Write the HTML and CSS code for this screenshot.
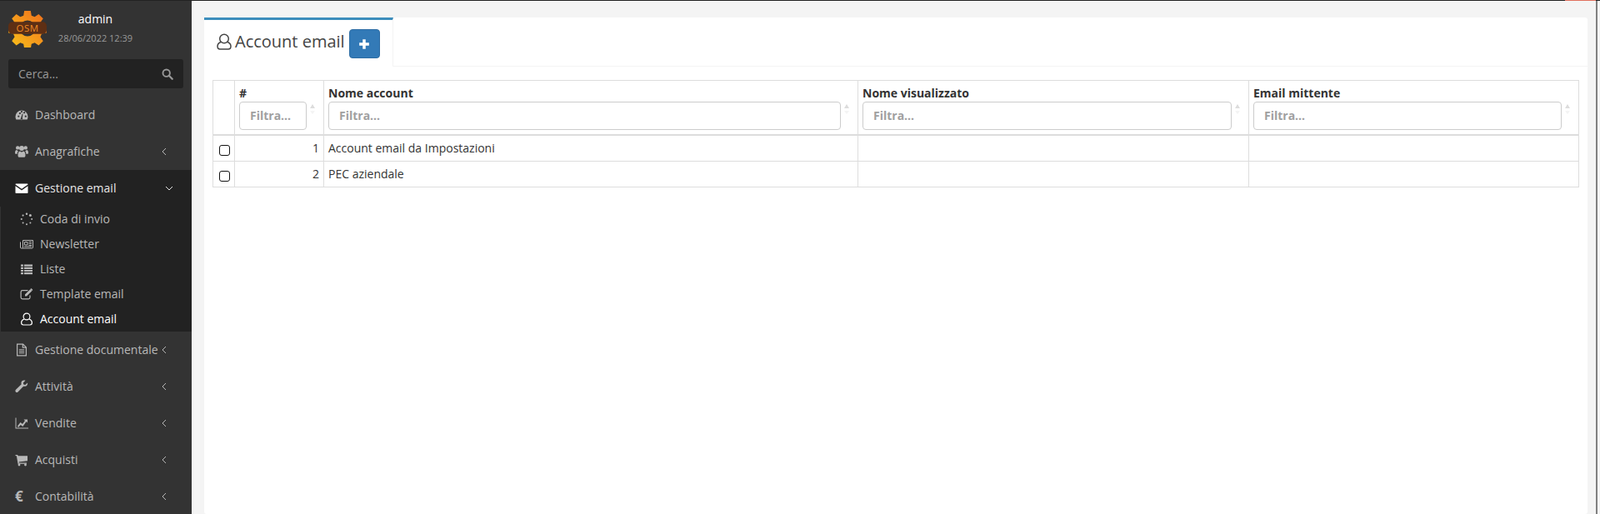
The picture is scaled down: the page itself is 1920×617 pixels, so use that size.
FILE: index.html
```html
<!DOCTYPE html>
<html lang="it">
<head>
<meta charset="utf-8">
<title>Account email</title>
<link rel="stylesheet" href="styles.css">
</head>
<body>
<div class="topline"><span class="topline-alert"></span></div>
<div class="shell">
  <aside class="sidebar">
    <div class="user-panel">
      <svg class="logo" viewBox="0 0 48 48" width="46" height="46">
        <defs><linearGradient id="g" x1="0" y1="1" x2="1" y2="0"><stop offset="0" stop-color="#f9c31b"/><stop offset="1" stop-color="#ef6c1c"/></linearGradient></defs>
        <g fill="url(#g)">
          <path d="M20 2h8l1 6 4 1.700 5-3.500 5.600 5.600-3.500 5 1.700 4 6 1v8l-6 1-1.700 4 3.500 5-5.600 5.600-5-3.500-4 1.700-1 6h-8l-1-6-4-1.700-5 3.500-5.600-5.600 3.500-5-1.700-4-6-1v-8l6-1 1.700-4-3.500-5 5.600-5.600 5 3.500 4-1.700z"/>
        </g>
        <circle cx="24" cy="24" r="10" fill="#333"/>
        <rect x="0" y="16" width="48" height="15" rx="5" fill="#5e2f14"/>
        <text class="logo-text" x="24" y="28.500" text-anchor="middle">OSM</text>
      </svg>
      <div class="user-info">
        <div class="user-name">admin</div>
        <div class="user-date">28/06/2022 12:39</div>
      </div>
    </div>
    <form class="search">
      <span class="search-text">Cerca...</span>
      <svg class="search-icon" viewBox="0 0 16 16" width="14" height="14"><circle cx="6.500" cy="6.500" r="4.800" fill="none" stroke="currentColor" stroke-width="2.200"/><path d="M10 10l4.500 4.500" stroke="currentColor" stroke-width="2.600" stroke-linecap="round"/></svg>
    </form>
    <nav>
      <ul class="menu">
        <li class="item"><a class="link">
          <svg class="ico" viewBox="0 0 16 16"><path fill-rule="evenodd" d="M8 2.500a7.500 7.500 0 0 0-7.500 7.500c0 1.300.3 2.500.9 3.500h13.200c.6-1 .9-2.200.9-3.500A7.500 7.500 0 0 0 8 2.500zM3.200 9.600a1.100 1.100 0 1 1 0 .1zM4.800 6a1.100 1.100 0 1 1 0 .1zM7 4.500a1.100 1.100 0 1 1 2 0 1.100 1.100 0 0 1-2 0zM10.300 6a1.100 1.100 0 1 1 1.500.100 1.100 1.100 0 0 1-1.500-.1zM11.700 9.700a1.100 1.100 0 1 1 2.200 0 1.100 1.100 0 0 1-2.200 0zM7 12l1.700-5.500.8.200L8.800 12A1.300 1.300 0 1 1 7 12z"/></svg>
          <span>Dashboard</span></a></li>
        <li class="item"><a class="link">
          <svg class="ico" viewBox="0 0 16 16"><circle cx="3.200" cy="3.400" r="2.200"/><circle cx="12.800" cy="3.400" r="2.200"/><circle cx="8" cy="4" r="3"/><path d="M0 9.500c0-2.200.8-3.400 2-3.400.5.700 1.100 1 1.900 1.100-.8.900-1.200 2.200-1.200 3.600H1c-.6 0-1-.5-1-1.300zM16 9.500c0-2.200-.8-3.400-2-3.400-.5.700-1.100 1-1.900 1.100.8.900 1.200 2.200 1.200 3.600H15c.6 0 1-.5 1-1.300zM3.500 12.500c0-3.300 1.100-4.900 2.600-4.900.5.600 1.200.9 1.900.9s1.400-.3 1.900-.9c1.500 0 2.600 1.600 2.600 4.900 0 1.500-.7 2.300-1.800 2.300H5.300c-1.100 0-1.800-.8-1.800-2.300z"/></svg>
          <span>Anagrafiche</span>
          <svg class="chev" viewBox="0 0 8 12"><path d="M6 2L2 6l4 4"/></svg></a></li>
        <li class="item active"><a class="link">
          <svg class="ico" viewBox="0 0 16 16"><path d="M.500 3.500A.9.900 0 0 1 1.400 2.500h13.200c.5 0 .9.400.9 1l-7.500 5.200zM.500 5.300V13c0 .6.400 1 .9 1h13.200c.5 0 .9-.4.900-1V5.300L8 10.500z"/></svg>
          <span>Gestione email</span>
          <svg class="chev" viewBox="0 0 12 8"><path d="M2 2l4 4 4-4"/></svg></a>
          <ul class="submenu">
            <li><a class="sublink">
              <svg class="ico" viewBox="0 0 16 16"><circle cx="8" cy="1.800" r="1.200"/><circle cx="12.400" cy="3.600" r="1.500"/><circle cx="14.200" cy="8" r="1"/><circle cx="12.400" cy="12.400" r="1"/><circle cx="8" cy="14.200" r="1"/><circle cx="3.600" cy="12.400" r="1"/><circle cx="1.800" cy="8" r="1.100"/><circle cx="3.600" cy="3.600" r="1.100"/></svg>
              <span>Coda di invio</span></a></li>
            <li><a class="sublink">
              <svg class="ico" viewBox="0 0 16 16"><path fill="none" stroke="currentColor" d="M.500 5.500V12c0 .6.300 1 1 1h13c.6 0 1-.4 1-1V3.500h-12V12.500"/><path fill="none" stroke="currentColor" d="M5.500 5.500h3.500v3.500H5.500z"/><path d="M10.500 5H14v1h-3.500zM10.500 7H14v1h-3.500zM10.500 9H14v1h-3.500zM5 10.500h9v1H5z"/></svg>
              <span>Newsletter</span></a></li>
            <li><a class="sublink">
              <svg class="ico" viewBox="0 0 16 16"><path d="M1 2.500h3v2.200H1zM5 2.500h10v2.200H5zM1 5.700h3v2.200H1zM5 5.700h10v2.200H5zM1 8.900h3v2.200H1zM5 8.900h10v2.200H5zM1 12.100h3v2.200H1zM5 12.100h10v2.200H5z"/></svg>
              <span>Liste</span></a></li>
            <li><a class="sublink">
              <svg class="ico" viewBox="0 0 16 16"><path fill="none" stroke="currentColor" stroke-width="1.200" d="M12 9.500V12c0 1-.7 1.800-1.800 1.800H3c-1.100 0-1.900-.8-1.900-1.800V5.500c0-1 .8-1.800 1.900-1.800h6.500"/><path d="M6 8.500L12.300 2.300l2 2L8 10.500H6zM13 1.500c.3-.3.700-.3 1 0l1 1c.3.300.3.700 0 1l-.6.600-2-2z"/></svg>
              <span>Template email</span></a></li>
            <li class="current"><a class="sublink">
              <svg class="ico" viewBox="0 0 16 16"><circle cx="8" cy="5" r="3.900" fill="none" stroke="currentColor" stroke-width="1.200"/><path fill="none" stroke="currentColor" stroke-width="1.200" d="M5 8C2.900 8.800 1.600 10.200 1.600 12.300c0 1.500.9 2.700 2.400 2.700h8c1.500 0 2.400-1.200 2.400-2.700 0-2.100-1.300-3.500-3.400-4.300"/></svg>
              <span>Account email</span></a></li>
          </ul>
        </li>
        <li class="item"><a class="link">
          <svg class="ico" viewBox="0 0 16 16"><path fill="none" stroke="currentColor" stroke-width="1.200" d="M2.600 1.100h7l3.800 3.800v10H2.600zM9.300 1.100v4h4"/><path d="M4.800 7.200h6.400v1H4.800zM4.800 9.200h6.400v1H4.800zM4.800 11.200h6.400v1H4.800z"/></svg>
          <span>Gestione documentale</span>
          <svg class="chev" viewBox="0 0 8 12"><path d="M6 2L2 6l4 4"/></svg></a></li>
        <li class="item"><a class="link">
          <svg class="ico" viewBox="0 0 16 16"><path d="M15 3.500l-2.700 2.500-2-.6-.5-2L12.500.8C10.600.2 8.800.7 8 2c-.7 1-.7 2.200-.3 3.200L1 11.800c-.8.800-.8 1.900-.1 2.600.8.800 1.900.8 2.600 0l6.600-6.700c1.700.4 3.300 0 4.300-1.300.7-.9.900-1.800.6-2.900z"/></svg>
          <span>Attività</span>
          <svg class="chev" viewBox="0 0 8 12"><path d="M6 2L2 6l4 4"/></svg></a></li>
        <li class="item"><a class="link">
          <svg class="ico" viewBox="0 0 16 16"><path d="M.500 1.500h1v12H16v1H.500z"/><path d="M3 11.500l3.500-4.500 2.500 2 3-4-1.500-1.500H15v4l-1.400-1.400L9.300 12 6.800 10l-2.800 3z"/></svg>
          <span>Vendite</span>
          <svg class="chev" viewBox="0 0 8 12"><path d="M6 2L2 6l4 4"/></svg></a></li>
        <li class="item"><a class="link">
          <svg class="ico" viewBox="0 0 16 16"><path d="M.500 2h2.700l.4 1.300H15v6L4.600 10.500l.2 1H14v1.200H3.500L1.900 3.200H.500z"/><circle cx="5" cy="14" r="1.400"/><circle cx="12.500" cy="14" r="1.400"/></svg>
          <span>Acquisti</span>
          <svg class="chev" viewBox="0 0 8 12"><path d="M6 2L2 6l4 4"/></svg></a></li>
        <li class="item"><a class="link">
          <b class="ico euro">€</b>
          <span>Contabilità</span>
          <svg class="chev" viewBox="0 0 8 12"><path d="M6 2L2 6l4 4"/></svg></a></li>
      </ul>
    </nav>
  </aside>

  <main class="content">
    <section class="panel">
      <header class="tabs">
        <div class="tab">
          <svg class="tab-icon" viewBox="0 0 18 20"><circle cx="9" cy="6.500" r="5.300" fill="none" stroke="currentColor" stroke-width="1.500"/><path fill="none" stroke="currentColor" stroke-width="1.500" d="M5 10.500C2.500 11.500 1 13.500 1 15.500c0 2 1 3.500 3 3.500h10c2 0 3-1.500 3-3.500 0-2-1.500-4-4-5"/></svg>
          <h1 class="tab-title">Account email</h1>
          <button class="add-btn" type="button"><svg viewBox="0 0 12 12" width="14" height="14"><path d="M4.500 1h3v3.500H11v3H7.500V11h-3V7.500H1v-3h3.500z" fill="#fff"/></svg></button>
        </div>
      </header>
      <div class="tab-body">
        <table class="grid">
          <colgroup>
            <col class="c-check"><col class="c-id"><col class="c-name"><col class="c-display"><col class="c-mail">
          </colgroup>
          <thead>
            <tr>
              <th></th>
              <th><div class="th-label">#</div><div class="filter"><input class="filter-input" placeholder="Filtra..."><span class="sort"></span></div></th>
              <th><div class="th-label">Nome account</div><div class="filter"><input class="filter-input" placeholder="Filtra..."><span class="sort"></span></div></th>
              <th><div class="th-label">Nome visualizzato</div><div class="filter"><input class="filter-input" placeholder="Filtra..."><span class="sort"></span></div></th>
              <th><div class="th-label">Email mittente</div><div class="filter"><input class="filter-input" placeholder="Filtra..."><span class="sort"></span></div></th>
            </tr>
          </thead>
          <tbody>
            <tr><td class="check"><span class="box"></span></td><td class="num">1</td><td>Account email da Impostazioni</td><td></td><td></td></tr>
            <tr><td class="check"><span class="box"></span></td><td class="num">2</td><td>PEC aziendale</td><td></td><td></td></tr>
          </tbody>
        </table>
      </div>
    </section>
  </main>
  <div class="scrollstrip"></div>
</div>
</body>
</html>
```
FILE: styles.css
```css
* { box-sizing: border-box; }
html, body { margin: 0; height: 617px; overflow: hidden; }
body { font-family: "Open Sans", sans-serif; font-size: 14px; line-height: 20px; color: #333; background: #f4f4f4; }

.topline { height: 1px; background: #222; display: flex; justify-content: flex-end; padding-right: 5px; }
.topline-alert { width: 37px; height: 1px; background: #e0705f; }

.shell { display: flex; height: 616px; overflow: hidden; }

.sidebar { width: 230px; flex: none; background: #333; color: #b8b8b8; overflow: hidden; }
.user-panel { height: 70px; display: flex; padding: 10px 0 0 10px; }
.logo { flex: none; }
.logo-text { font: 400 12px "Open Sans", sans-serif; fill: #f08a24; letter-spacing: .5px; }
.user-info { width: 117px; flex: none; text-align: center; }
.user-name { color: #fff; font-size: 14px; line-height: 20px; margin-top: 2px; }
.user-date { font-size: 11px; color: #999; line-height: 16px; margin-top: 5px; }

.search { margin: 0 10px 10px; height: 35px; background: #222; border-radius: 3px; display: flex; align-items: center; justify-content: space-between; padding: 0 12px; color: #999; }
.search-icon { color: #999; }

.menu, .submenu { list-style: none; margin: 0; padding: 0; }
.link { display: flex; align-items: center; height: 44px; padding: 0 29px 0 18px; }
.ico { width: 16px; height: 16px; flex: none; margin-right: 8px; fill: currentColor; }
.chev { width: 8px; height: 12px; margin-left: auto; flex: none; fill: none; stroke: currentColor; stroke-width: 1; }
.active .chev { width: 12px; height: 8px; margin-right: -8px; }
.euro { font-size: 17px; line-height: 16px; font-weight: 700; font-family: "Open Sans", sans-serif; }
.active > .link { background: #222; color: #e6e6e6; }
.active > .link .ico { color: #fff; }
.submenu { background: #222; border-left: 1px solid #333; }
.sublink { display: flex; align-items: center; height: 30px; padding-left: 23px; }
.current { color: #fff; }

.content { flex: 1; min-width: 0; padding: 20px 10px 0 15px; }
.panel { background: #fff; height: 596px; border-radius: 3px; }
.tabs { height: 59px; border-bottom: 1px solid #f4f4f4; }
.tab { width: 227px; height: 59px; background: #fff; border-top: 3px solid #3c8dbc; border-right: 1px solid #f4f4f4; display: flex; align-items: flex-start; padding: 0 0 0 15px; }
.tab-icon { width: 18px; height: 20px; color: #444; margin-top: 16px; flex: none; }
.tab-title { font-size: 20px; font-weight: 400; line-height: 28px; margin: 12px 5px 0 4px; color: #444; }
.add-btn { width: 37px; height: 35px; margin-top: 11px; padding: 0; background: #337ab7; border: 1px solid #2e6da4; border-radius: 4px; display: flex; align-items: center; justify-content: center; }

.tab-body { padding: 16px 10px 0; }
.grid { width: 1639px; border-collapse: collapse; table-layout: fixed; }
.c-check { width: 26px; }
.c-id { width: 107px; }
.c-name { width: 641px; }
.c-display { width: 469px; }
.c-mail { width: 396px; }
.grid th, .grid td { border: 1px solid #ddd; padding: 5px; text-align: left; vertical-align: top; }
.grid th { border-bottom-width: 2px; font-weight: 700; }
.grid td { height: 31px; }
.grid td.num { text-align: right; }
.grid td.check { padding: 11px 0 0 7px; }
.box { display: block; width: 13px; height: 13px; border: 1.500px solid #111; border-radius: 3px; background: #fff; }
.th-label { line-height: 20px; height: 20px; }
.filter { display: flex; align-items: flex-start; }
.filter-input { flex: 1; min-width: 0; height: 34px; border: 1px solid #ccc; border-radius: 4px; padding: 5px 12px 7px; font: 700 14px "Open Sans", sans-serif; color: #555; background: #fff; }
.filter-input::placeholder { color: #a0a0a0; opacity: 1; }
.sort { flex: none; width: 15px; height: 20px; margin-top: 2px; position: relative; }
.sort::before { content: ""; position: absolute; left: 4px; top: 1px; border: 3.500px solid transparent; border-top: 0; border-bottom: 5px solid #ddd; }
.sort::after { content: ""; position: absolute; left: 4px; top: 9px; border: 3.500px solid transparent; border-bottom: 0; border-top: 4px solid #f4f4f4; }

.scrollstrip { width: 5px; flex: none; background: #f4f4f4; border-left: 2px solid #808080; }
```
